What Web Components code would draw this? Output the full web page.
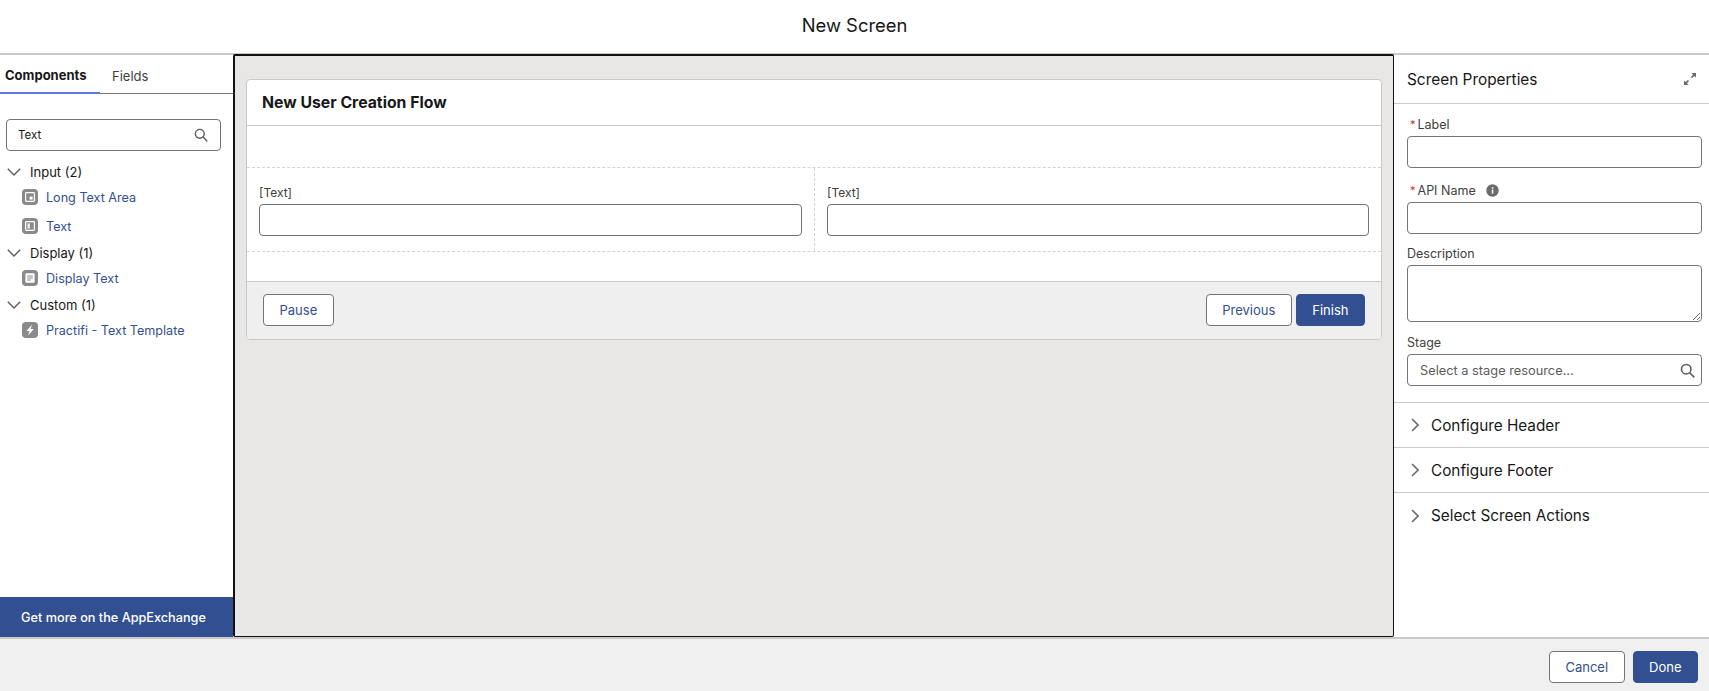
<!DOCTYPE html>
<html lang="en">
<head>
<meta charset="utf-8">
<title>New Screen</title>
<style>
    html, body { margin: 0; height: 100%; overflow: hidden; background: #fff; }
    body { font-family: Inter, "Liberation Sans", sans-serif; font-size: 13px; color: #181818; }
</style>
</head>
<body>

<flow-builder>
    <modal-header slot="header">New Screen</modal-header>

    <palette-panel slot="left">
        <tree-group label="Input (2)">
            <tree-item icon="longtext">Long Text Area</tree-item>
            <tree-item icon="text" style="margin-top:13px">Text</tree-item>
        </tree-group>
        <tree-group label="Display (1)">
            <tree-item icon="display">Display Text</tree-item>
        </tree-group>
        <tree-group label="Custom (1)">
            <tree-item icon="bolt">Practifi - Text Template</tree-item>
        </tree-group>
    </palette-panel>

    <screen-canvas slot="center">
        <screen-card title="New User Creation Flow"></screen-card>
    </screen-canvas>

    <props-panel slot="right"></props-panel>

    <modal-footer slot="footer">
        <sf-button>Cancel</sf-button>
        <sf-button variant="brand">Done</sf-button>
    </modal-footer>
</flow-builder>

<script>
const SEARCH_ICON = `<svg width="14" height="14" viewBox="0 0 14 14" fill="none" stroke="#5c5c5c" stroke-width="1.4" stroke-linecap="round"><circle cx="5.8" cy="5.8" r="4.4"/><path d="M9.1 9.1l3.8 3.8"/></svg>`;

class FlowBuilder extends HTMLElement {
    constructor() {
        super();
        this.attachShadow({ mode: 'open' }).innerHTML = `
            <style>
                :host { display: flex; flex-direction: column; height: 691px; }
                .main { display: flex; height: 582px; flex: none; }
            </style>
            <slot name="header"></slot>
            <div class="main">
                <slot name="left"></slot>
                <slot name="center"></slot>
                <slot name="right"></slot>
            </div>
            <slot name="footer"></slot>
        `;
    }
}

class ModalHeader extends HTMLElement {
    constructor() {
        super();
        this.attachShadow({ mode: 'open' }).innerHTML = `
            <style>
                :host {
                    display: flex; align-items: center; justify-content: center;
                    height: 55px; padding-bottom: 3px; box-sizing: border-box; flex: none;
                    font-size: 18.4px; color: #181818; background: #fff;
                    border-bottom: 2px solid #c9c9c9;
                }
            </style>
            <slot></slot>
        `;
    }
}

class ModalFooter extends HTMLElement {
    constructor() {
        super();
        this.attachShadow({ mode: 'open' }).innerHTML = `
            <style>
                :host {
                    display: flex; justify-content: flex-end; align-items: flex-start; gap: 8px;
                    box-sizing: border-box; height: 54px; flex: none;
                    padding: 12px 11px 0 0;
                    background: #f0f0f0; border-top: 2px solid #c9c9c9;
                }
            </style>
            <slot></slot>
        `;
    }
}

class SfButton extends HTMLElement {
    constructor() {
        super();
        const brand = this.getAttribute('variant') === 'brand';
        this.attachShadow({ mode: 'open' }).innerHTML = `
            <style>
                :host { display: inline-block; }
                .btn {
                    display: flex; align-items: center; justify-content: center;
                    box-sizing: border-box; height: 32px; padding: 0 15.5px;
                    border-radius: 4px; font-size: 13px;
                    border: 1px solid ${brand ? '#324f92' : '#747474'};
                    background: ${brand ? '#324f92' : '#fff'};
                    color: ${brand ? '#fff' : '#324f92'};
                }
            </style>
            <div class="btn"><slot></slot></div>
        `;
    }
}

class PalettePanel extends HTMLElement {
    constructor() {
        super();
        this.attachShadow({ mode: 'open' }).innerHTML = `
            <style>
                :host {
                    display: flex; flex-direction: column; width: 233px; flex: none;
                    background: #fff;
                }
                .tabs {
                    display: flex; height: 39px; box-sizing: border-box; flex: none;
                    border-bottom: 1px solid #747474; font-size: 13px;
                }
                .tab { display: flex; align-items: center; height: 39px; box-sizing: border-box; padding-top: 2px; }
                .tab.on { width: 100px; padding-left: 5px; font-weight: 700; border-bottom: 2px solid #5a7bdc; }
                .tab.off { padding-left: 12px; color: #3e3e3c; }
                .search {
                    display: flex; align-items: center; justify-content: space-between;
                    box-sizing: border-box; height: 32px; margin: 25px 12px 0 6px;
                    padding: 0 12px 0 11px; border: 1px solid #747474; border-radius: 4px;
                    flex: none; font-size: 11.5px;
                }
                .search svg { display: block; }
                .tree { flex: 1; padding-top: 10px; }
                .more {
                    display: flex; align-items: center; justify-content: center; flex: none;
                    height: 40px; padding-right: 6px; background: #324f92; color: #fff; font-size: 12.7px; font-weight: 500;
                }
            </style>
            <div class="tabs">
                <div class="tab on">Components</div>
                <div class="tab off">Fields</div>
            </div>
            <div class="search"><span>Text</span>${SEARCH_ICON}</div>
            <div class="tree"><slot></slot></div>
            <div class="more">Get more on the AppExchange</div>
        `;
    }
}

class TreeGroup extends HTMLElement {
    constructor() {
        super();
        this.attachShadow({ mode: 'open' }).innerHTML = `
            <style>
                :host { display: block; }
                .head { display: flex; align-items: center; height: 22px; padding-left: 7px; gap: 9px; font-size: 13px; color: #181818; }
                svg { display: block; }
                .items { display: block; }
            </style>
            <div class="head">
                <svg width="14" height="8" viewBox="0 0 14 8" fill="none" stroke="#5c5c5c" stroke-width="1.4"><path d="M.8.8L7 7l6.2-6.2"/></svg>
                <span>${this.getAttribute('label')}</span>
            </div>
            <div class="items"><slot></slot></div>
        `;
    }
}

const TREE_ICONS = {
    longtext: '<rect x="3.6" y="3.6" width="8.8" height="8.8" rx=".8" fill="none" stroke="#fff" stroke-width="1.2"/><rect x="7.6" y="7.6" width="3" height="3" fill="#fff"/>',
    text: '<rect x="3.6" y="3.6" width="8.8" height="8.8" rx=".8" fill="none" stroke="#fff" stroke-width="1.2"/><rect x="5.4" y="5.4" width="2.6" height="5.2" fill="#fff" fill-opacity=".8"/>',
    display: '<rect x="3.4" y="3.2" width="9.2" height="9.6" rx="1" fill="#fff"/><path d="M5.2 6h5.6M5.2 8h5.6M5.2 10h3.8" stroke="#8a8a8a" stroke-width="1"/>',
    bolt: '<path d="M10.2 2.6L4.4 9h3.1l-1.5 4.6L11.8 7H8.5z" fill="#fff"/>'
};

class TreeItem extends HTMLElement {
    constructor() {
        super();
        const glyph = TREE_ICONS[this.getAttribute('icon')];
        this.attachShadow({ mode: 'open' }).innerHTML = `
            <style>
                :host { display: flex; align-items: center; height: 16px; padding-left: 22px; gap: 8px; margin: 6px 0 8px; font-size: 12.6px; color: #324f92; }
                svg { display: block; flex: none; }
            </style>
            <svg width="16" height="16" viewBox="0 0 16 16"><rect width="16" height="16" rx="4" fill="#8a8a8a"/>${glyph}</svg>
            <span><slot></slot></span>
        `;
    }
}

class ScreenCanvas extends HTMLElement {
    constructor() {
        super();
        this.attachShadow({ mode: 'open' }).innerHTML = `
            <style>
                :host {
                    display: block; flex: 1; box-sizing: border-box;
                    background: #e8e7e5;
                    border-style: solid; border-color: #111;
                    border-width: 2px 1px 1px 2px;
                    border-radius: 2px; margin-top: -1px;
                    padding: 23px 11px 0 11px;
                }
            </style>
            <slot></slot>
        `;
    }
}

class ScreenCard extends HTMLElement {
    constructor() {
        super();
        this.attachShadow({ mode: 'open' }).innerHTML = `
            <style>
                :host {
                    display: block; box-sizing: border-box; height: 261px; overflow: hidden;
                    border: 1px solid #c9c9c9; border-radius: 4px; background: #fff;
                }
                .title {
                    display: flex; align-items: center; box-sizing: border-box;
                    height: 46px; padding-left: 15px; font-size: 15.8px; font-weight: 700;
                    border-bottom: 1px solid #c9c9c9;
                }
                .gap { height: 42px; box-sizing: border-box; border-bottom: 1px dashed #d4d4d4; }
                .cols { display: grid; grid-template-columns: 1fr 1fr; height: 84px; box-sizing: border-box; border-bottom: 1px dashed #d4d4d4; }
                .col { padding: 16px 12px 0; min-width: 0; }
                .col + .col { border-left: 1px dashed #d4d4d4; }
                .tail { height: 30px; box-sizing: border-box; border-bottom: 1px solid #c9c9c9; }
                .foot {
                    display: flex; justify-content: space-between; align-items: flex-start;
                    height: 57px; box-sizing: border-box; padding: 12px 16px 0; background: #efefef;
                }
                .right { display: flex; gap: 4px; }
            </style>
            <div class="title">${this.getAttribute('title')}</div>
            <div class="gap"></div>
            <div class="cols">
                <div class="col"><sf-field label="[Text]"></sf-field></div>
                <div class="col"><sf-field label="[Text]"></sf-field></div>
            </div>
            <div class="tail"></div>
            <div class="foot">
                <sf-button>Pause</sf-button>
                <div class="right">
                    <sf-button>Previous</sf-button>
                    <sf-button variant="brand">Finish</sf-button>
                </div>
            </div>
        `;
    }
}

class SfField extends HTMLElement {
    constructor() {
        super();
        const label = this.getAttribute('label');
        const required = this.hasAttribute('required');
        const info = this.hasAttribute('info');
        const placeholder = this.getAttribute('placeholder');
        const search = this.hasAttribute('search');
        const area = this.hasAttribute('area');
        this.attachShadow({ mode: 'open' }).innerHTML = `
            <style>
                :host { display: block; }
                .label { display: flex; align-items: center; height: 16px; margin-bottom: 4px; font-size: var(--label-size, 12px); color: #3e3e3c; }
                .req { color: #c23934; margin: 0 2px 0 3px; font-size: 11px; }
                .info { margin-left: 10px; display: block; }
                .box {
                    display: flex; align-items: center; justify-content: space-between;
                    box-sizing: border-box; height: 32px; padding: 0 6px 0 12px;
                    border: 1px solid #747474; border-radius: 4px; background: #fff;
                    color: #5c5c5c; font-size: 12.8px;
                }
                textarea {
                    display: block; box-sizing: border-box; width: 100%; height: 57px; margin: 0;
                    border: 1px solid #747474; border-radius: 4px; resize: vertical; outline: none; background: #fff;
                }
                svg { display: block; }
            </style>
            <div class="label">
                ${required ? '<span class="req">*</span>' : ''}<span>${label}</span>
                ${info ? '<svg class="info" width="13" height="13" viewBox="0 0 13 13"><circle cx="6.5" cy="6.5" r="6.2" fill="#6b6b6b"/><rect x="5.8" y="5.6" width="1.5" height="4" fill="#fff"/><rect x="5.8" y="3.2" width="1.5" height="1.5" fill="#fff"/></svg>' : ''}
            </div>
            ${area ? '<textarea aria-label="' + label + '"></textarea>' : `<div class="box"><span>${placeholder || ''}</span>${search ? SEARCH_ICON.replace('width="14" height="14"', 'width="15" height="15"').replace('stroke-width="1.4"', 'stroke-width="1.5"') : ''}</div>`}
        `;
    }
}

class PropsPanel extends HTMLElement {
    constructor() {
        super();
        this.attachShadow({ mode: 'open' }).innerHTML = `
            <style>
                :host { display: block; width: 315px; flex: none; background: #fff; --label-size: 12.5px; }
                .head {
                    display: flex; align-items: center; justify-content: space-between;
                    box-sizing: border-box; height: 49px; padding: 0 12px 0 13px; font-size: 15.4px;
                    border-bottom: 1px solid #c9c9c9;
                }
                svg { display: block; }
                .form {
                    display: flex; flex-direction: column;
                    padding: 12px 7px 16px 13px; border-bottom: 1px solid #c9c9c9;
                }
            </style>
            <div class="head">
                <span>Screen Properties</span>
                <svg width="14" height="14" viewBox="0 0 14 14" fill="#6b6b6b"><path d="M8.4 1h4.6v4.6l-1.7-1.7-2.2 2.2-1.2-1.2 2.2-2.2zM5.6 13H1V8.4l1.7 1.7 2.2-2.2 1.2 1.2-2.2 2.2z"/></svg>
            </div>
            <div class="form">
                <sf-field label="Label" required></sf-field>
                <sf-field label="API Name" required info style="margin-top:14px"></sf-field>
                <sf-field label="Description" area style="margin-top:11px"></sf-field>
                <sf-field label="Stage" placeholder="Select a stage resource..." search style="margin-top:12px"></sf-field>
            </div>
            <section-row>Configure Header</section-row>
            <section-row>Configure Footer</section-row>
            <section-row last>Select Screen Actions</section-row>
        `;
    }
}

class SectionRow extends HTMLElement {
    constructor() {
        super();
        this.attachShadow({ mode: 'open' }).innerHTML = `
            <style>
                :host {
                    display: flex; align-items: center; gap: 12px; box-sizing: border-box;
                    height: 45px; padding-left: 17px; font-size: 15.3px; color: #181818;
                    ${this.hasAttribute('last') ? '' : 'border-bottom: 1px solid #c9c9c9;'}
                }
                svg { display: block; flex: none; }
            </style>
            <svg width="8" height="14" viewBox="0 0 8 14" fill="none" stroke="#6b6b6b" stroke-width="1.6"><path d="M1 1l6 6-6 6"/></svg>
            <span><slot></slot></span>
        `;
    }
}

customElements.define('sf-button', SfButton);
customElements.define('sf-field', SfField);
customElements.define('section-row', SectionRow);
customElements.define('tree-item', TreeItem);
customElements.define('tree-group', TreeGroup);
customElements.define('modal-header', ModalHeader);
customElements.define('modal-footer', ModalFooter);
customElements.define('palette-panel', PalettePanel);
customElements.define('screen-card', ScreenCard);
customElements.define('screen-canvas', ScreenCanvas);
customElements.define('props-panel', PropsPanel);
customElements.define('flow-builder', FlowBuilder);
</script>
</body>
</html>
